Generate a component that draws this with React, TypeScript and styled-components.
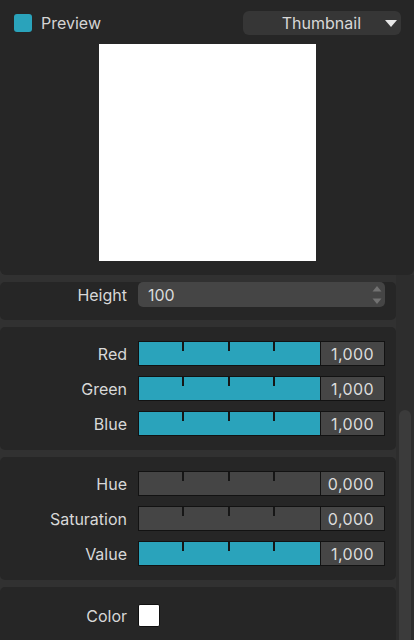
import styled, { createGlobalStyle } from "styled-components";

const GlobalStyle = createGlobalStyle`
  html, body {
    margin: 0;
    padding: 0;
    background: #313131;
  }
  body {
    font-family: Inter, "Liberation Sans", sans-serif;
    font-size: 16px;
    color: #d6d6d6;
    -webkit-font-smoothing: antialiased;
  }
`;

type Channel = {
  label: string;
  value: number;
};

const rgb: Channel[] = [
  { label: "Red", value: 1 },
  { label: "Green", value: 1 },
  { label: "Blue", value: 1 },
];

const hsv: Channel[] = [
  { label: "Hue", value: 0 },
  { label: "Saturation", value: 0 },
  { label: "Value", value: 1 },
];

const formatValue = (v: number) => v.toFixed(3).replace(".", ",");

function SliderRow({ label, value }: Channel) {
  return (
    <Row>
      <Label>{label}</Label>
      <Slider>
        <Track>
          <Fill style={{ width: `${value * 100}%` }} />
          <Tick $at={25} />
          <Tick $at={50} />
          <Tick $at={75} />
        </Track>
        <ValueBox>{formatValue(value)}</ValueBox>
      </Slider>
    </Row>
  );
}

export default function App() {
  return (
    <Window>
      <GlobalStyle />
      <TopPanel>
        <Header>
          <CheckLabel>
            <Checkbox />
            Preview
          </CheckLabel>
          <Dropdown>
            Thumbnail
            <Caret />
          </Dropdown>
        </Header>
        <PreviewImage />
      </TopPanel>

      <Body>
        <Content>
          <Section $pad="0 11px 13px 0">
            <Row>
              <Label>Height</Label>
              <NumberInput>
                100
                <Stepper>
                  <svg width="10" height="20" viewBox="0 0 10 20">
                    <path d="M5 1 L9.5 6.5 H0.5 Z" fill="#727272" />
                    <path d="M0.5 13.5 H9.5 L5 19 Z" fill="#727272" />
                  </svg>
                </Stepper>
              </NumberInput>
            </Row>
          </Section>

          <Section $pad="14px 11px 14px 0">
            {rgb.map((c) => (
              <SliderRow key={c.label} {...c} />
            ))}
          </Section>

          <Section $pad="14px 11px 14px 0">
            {hsv.map((c) => (
              <SliderRow key={c.label} {...c} />
            ))}
          </Section>

          <Section $pad="17px 11px 20px 0">
            <Row $height={23}>
              <Label>Color</Label>
              <Swatch />
            </Row>
          </Section>
        </Content>
        <ScrollTrack>
          <ScrollThumb />
        </ScrollTrack>
      </Body>
    </Window>
  );
}

const Window = styled.div`
  width: 414px;
  height: 640px;
  overflow: hidden;
  display: flex;
  flex-direction: column;
`;

const TopPanel = styled.div`
  background: #262626;
  border-radius: 0 0 6px 6px;
  padding: 11px 13px 14px 14px;
  display: flex;
  flex-direction: column;
  align-items: center;
`;

const Header = styled.div`
  align-self: stretch;
  height: 24px;
  display: flex;
  align-items: center;
  justify-content: space-between;
`;

const CheckLabel = styled.label`
  display: flex;
  align-items: center;
  gap: 9px;
  color: #d4d4d4;
`;

const Checkbox = styled.span`
  width: 18px;
  height: 18px;
  border-radius: 3px;
  background: #2aa3bb;
`;

const Dropdown = styled.div`
  width: 158px;
  height: 24px;
  box-sizing: border-box;
  border-radius: 6px;
  background: #363636;
  display: flex;
  align-items: center;
  justify-content: flex-end;
  padding-right: 4px;
  gap: 24px;
  color: #d8d8d8;
`;

const Caret = styled.span`
  width: 0;
  height: 0;
  border-left: 6.5px solid transparent;
  border-right: 6.5px solid transparent;
  border-top: 7px solid #e8e8e8;
`;

const PreviewImage = styled.div`
  margin-top: 9px;
  width: 217px;
  height: 217px;
  background: #ffffff;
`;

const Body = styled.div`
  flex: 1;
  display: flex;
  min-height: 0;
`;

const Content = styled.div`
  flex: 1;
  display: flex;
  flex-direction: column;
  gap: 7px;
  padding-top: 7px;
`;

const Section = styled.div<{ $pad: string }>`
  background: #262626;
  border-radius: 5px;
  padding: ${(p) => p.$pad};
  display: flex;
  flex-direction: column;
  gap: 10px;
`;

const Row = styled.div<{ $height?: number }>`
  height: ${(p) => p.$height ?? 25}px;
  display: flex;
  align-items: center;
  gap: 11px;
`;

const Label = styled.span`
  width: 127px;
  text-align: right;
  color: #d8d8d8;
  white-space: nowrap;
`;

const NumberInput = styled.div`
  width: 247px;
  height: 25px;
  box-sizing: border-box;
  border-radius: 5px;
  background: #454545;
  padding-left: 10px;
  display: flex;
  align-items: center;
  color: #dadada;
`;

const Stepper = styled.span`
  margin-left: auto;
  margin-right: 3px;
  display: flex;
`;

const Slider = styled.div`
  width: 247px;
  height: 25px;
  display: flex;
`;

const Track = styled.div`
  position: relative;
  width: 183px;
  box-sizing: border-box;
  border: 1px solid #121212;
  background: #454545;
  overflow: hidden;
`;

const Fill = styled.div`
  height: 100%;
  background: #2aa3bb;
`;

const Tick = styled.span<{ $at: number }>`
  position: absolute;
  top: 0;
  left: calc(${(p) => p.$at}% - 2px);
  width: 2px;
  height: 9px;
  background: #161616;
`;

const ValueBox = styled.div`
  flex: 1;
  margin-left: -1px;
  box-sizing: border-box;
  border: 1px solid #121212;
  background: #464646;
  display: flex;
  align-items: center;
  justify-content: flex-end;
  padding-right: 10px;
  letter-spacing: 0.4px;
  color: #dcdcdc;
`;

const Swatch = styled.div`
  width: 22px;
  height: 23px;
  box-sizing: border-box;
  border: 1px solid #101010;
  border-radius: 2px;
  background: #ffffff;
`;

const ScrollTrack = styled.div`
  width: 18px;
  background: #2d2d2d;
  padding: 135px 3px 0 3px;
  box-sizing: border-box;
  display: flex;
`;

const ScrollThumb = styled.div`
  flex: 1;
  border-radius: 6px 6px 0 0;
  background: #3b3b3b;
`;
